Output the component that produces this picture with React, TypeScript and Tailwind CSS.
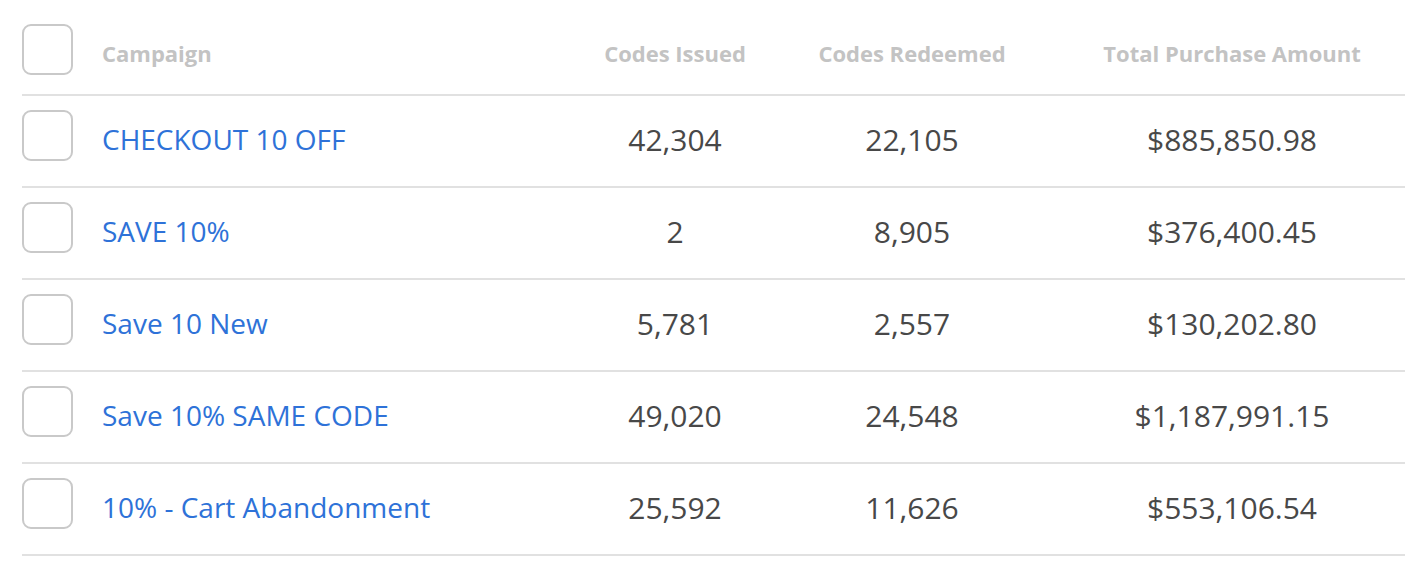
import React from "react";

type Campaign = {
  id: number;
  name: string;
  issued: string;
  redeemed: string;
  total: string;
};

const campaigns: Campaign[] = [
  { id: 1, name: "CHECKOUT 10 OFF", issued: "42,304", redeemed: "22,105", total: "$885,850.98" },
  { id: 2, name: "SAVE 10%", issued: "2", redeemed: "8,905", total: "$376,400.45" },
  { id: 3, name: "Save 10 New", issued: "5,781", redeemed: "2,557", total: "$130,202.80" },
  { id: 4, name: "Save 10% SAME CODE", issued: "49,020", redeemed: "24,548", total: "$1,187,991.15" },
  { id: 5, name: "10% - Cart Abandonment", issued: "25,592", redeemed: "11,626", total: "$553,106.54" },
];

const cols = "grid grid-cols-[80px_483px_180px_294px_1fr] items-start";

const Checkbox = ({ className }: { className: string }) => (
  <div
    className={
      "w-[51px] h-[51px] rounded-[9px] border-2 border-[#c9c9c9] bg-white " +
      className
    }
  />
);

const App = () => {
  return (
    <div
      className="w-[1405px] h-[570px] bg-white overflow-hidden"
      style={{ fontFamily: '"Open Sans", "Liberation Sans", sans-serif' }}
    >
      <div className="ml-[22px]">
        {/* header */}
        <div className={cols + " h-[96px] border-b-2 border-[#e1e1e1]"}>
          <Checkbox className="mt-[24px]" />
          <div className="mt-[38px] text-[22px] leading-[30px] font-bold text-[#c3c3c3]">
            Campaign
          </div>
          <div className="mt-[38px] text-[22px] leading-[30px] font-bold text-[#c3c3c3] text-center">
            Codes Issued
          </div>
          <div className="mt-[38px] text-[22px] leading-[30px] font-bold text-[#c3c3c3] text-center">
            Codes Redeemed
          </div>
          <div className="mt-[38px] text-[22px] leading-[30px] font-bold text-[#c3c3c3] text-center">
            Total Purchase Amount
          </div>
        </div>

        {campaigns.map((c) => {
          return (
            <div
              key={c.id}
              className={cols + " h-[92px] border-b-2 border-[#e1e1e1]"}
            >
              <Checkbox className="mt-[14px]" />
              <a
                href="#"
                className="mt-[24px] text-[28px] leading-[38px] text-[#2e72d8] whitespace-nowrap"
              >
                {c.name}
              </a>
              <div className="mt-[25px] text-[30px] leading-[38px] text-[#484848] text-center">
                {c.issued}
              </div>
              <div className="mt-[25px] text-[30px] leading-[38px] text-[#484848] text-center">
                {c.redeemed}
              </div>
              <div className="mt-[25px] text-[30px] leading-[38px] text-[#484848] text-center">
                {c.total}
              </div>
            </div>
          );
        })}
      </div>
    </div>
  );
};

export default App;
